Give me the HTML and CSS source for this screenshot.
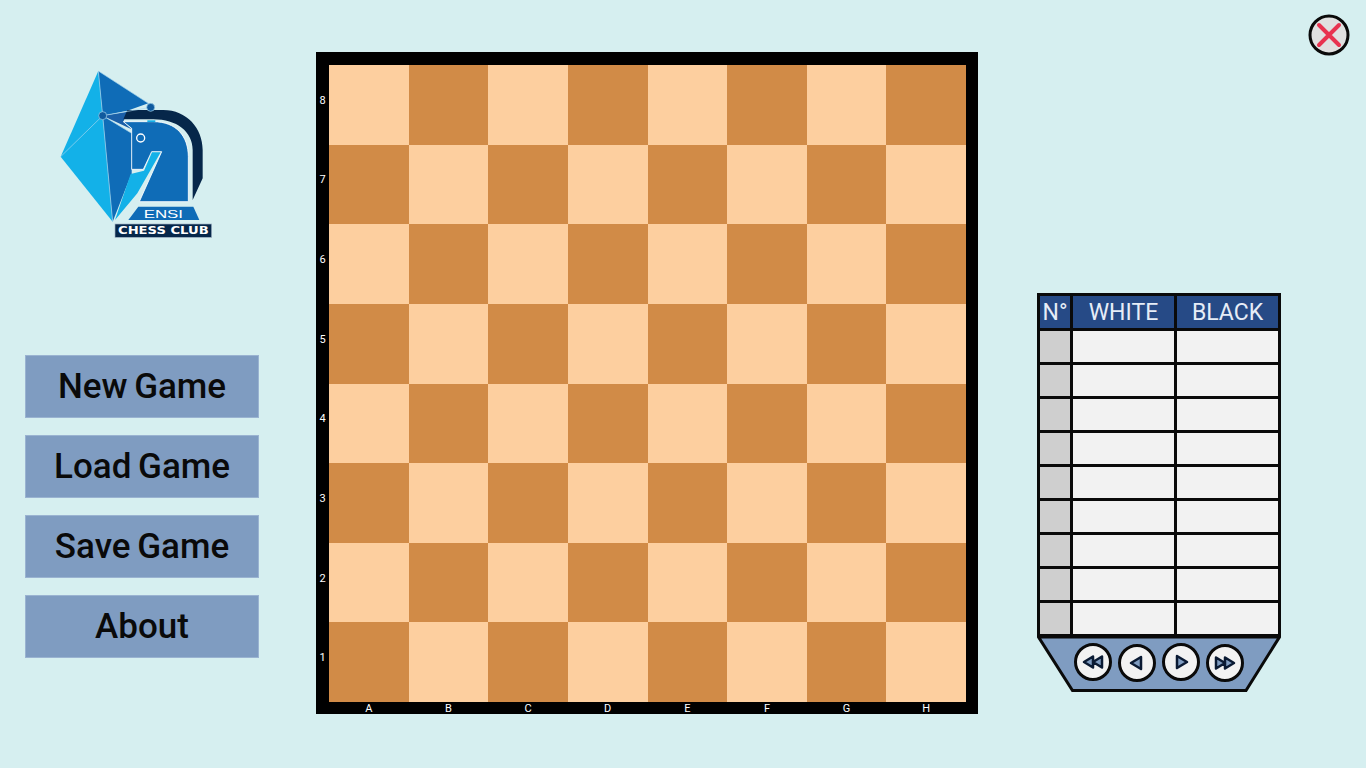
FILE: index.html
```html
<!DOCTYPE html>
<html lang="en">
<head>
  <meta charset="UTF-8" />
  <title>ENSI Chess Club</title>
  <link rel="stylesheet" href="styles.css">
</head>
<body>
  <div class="app">

    <aside class="sidebar">
      <svg class="logo" viewBox="0 0 570 570" width="190" height="190">
        <polygon points="175,33 62,290 218,485 188,167" fill="#13b1e8"/>
        <polygon points="175,33 325,130 262,152 188,167" fill="#0f6cb7"/>
        <polygon points="188,167 218,485 275,340 275,220" fill="#0f6cb7"/>
        <polygon points="188,167 262,155 250,185 275,208" fill="#1a5fa8"/>
        <path d="M262,150 L370,150 C440,150 488,205 488,270 L488,355 L458,420 L458,270 C458,215 410,178 340,178 L250,178 Z" fill="#06274a"/>
        <path d="M250,185 L340,185 C410,185 445,230 445,290 L445,425 L298,425 L365,275 L335,275 L310,328 L275,328 L275,205 Z" fill="#0f6cb7" stroke="#fff" stroke-width="2.5"/>
        <polygon points="225,480 272,342 312,332 336,277 362,277 292,400" fill="#13b1e8"/>
        <rect x="322" y="181" width="24" height="5" fill="#13b1e8"/>
        <circle cx="302" cy="234" r="12" fill="#0f6cb7" stroke="#fff" stroke-width="4"/>
        <g stroke="#a9d8ee" stroke-width="2" fill="none">
          <path d="M175,33 L188,167 L218,485 M62,290 L188,167 L275,220 M188,167 L332,142 M175,33 L325,130"/>
        </g>
        <circle cx="188" cy="167" r="12" fill="#0f5a9e" stroke="#a9d8ee" stroke-width="2"/>
        <circle cx="332" cy="142" r="12" fill="#0f5a9e" stroke="#a9d8ee" stroke-width="2"/>
        <polygon points="265,480 295,440 460,440 478,480" fill="#0f6cb7"/>
        <text x="370" y="473" class="logo-ensi" textLength="118" lengthAdjust="spacingAndGlyphs">ENSI</text>
        <rect x="225" y="492" width="290" height="40" fill="#06274a" stroke="#9fb2c4" stroke-width="2"/>
        <text x="370" y="522" class="logo-club" textLength="272" lengthAdjust="spacingAndGlyphs">CHESS CLUB</text>
      </svg>
      <nav class="menu">
        <button class="menu-btn">New Game</button>
        <button class="menu-btn">Load Game</button>
        <button class="menu-btn">Save Game</button>
        <button class="menu-btn">About</button>
      </nav>
    </aside>

    <main class="board">
      <div class="ranks">
        <span>8</span><span>7</span><span>6</span><span>5</span><span>4</span><span>3</span><span>2</span><span>1</span>
      </div>
      <div class="squares">
        <div class="l"></div><div class="d"></div><div class="l"></div><div class="d"></div><div class="l"></div><div class="d"></div><div class="l"></div><div class="d"></div>
        <div class="d"></div><div class="l"></div><div class="d"></div><div class="l"></div><div class="d"></div><div class="l"></div><div class="d"></div><div class="l"></div>
        <div class="l"></div><div class="d"></div><div class="l"></div><div class="d"></div><div class="l"></div><div class="d"></div><div class="l"></div><div class="d"></div>
        <div class="d"></div><div class="l"></div><div class="d"></div><div class="l"></div><div class="d"></div><div class="l"></div><div class="d"></div><div class="l"></div>
        <div class="l"></div><div class="d"></div><div class="l"></div><div class="d"></div><div class="l"></div><div class="d"></div><div class="l"></div><div class="d"></div>
        <div class="d"></div><div class="l"></div><div class="d"></div><div class="l"></div><div class="d"></div><div class="l"></div><div class="d"></div><div class="l"></div>
        <div class="l"></div><div class="d"></div><div class="l"></div><div class="d"></div><div class="l"></div><div class="d"></div><div class="l"></div><div class="d"></div>
        <div class="d"></div><div class="l"></div><div class="d"></div><div class="l"></div><div class="d"></div><div class="l"></div><div class="d"></div><div class="l"></div>
      </div>
      <div class="files">
        <span>A</span><span>B</span><span>C</span><span>D</span><span>E</span><span>F</span><span>G</span><span>H</span>
      </div>
    </main>

    <section class="side">
      <button class="close-btn" aria-label="Close">
        <svg viewBox="0 0 44 44" width="44" height="44">
          <circle cx="22" cy="22" r="19" fill="#e0e0e0" stroke="#0a0a0a" stroke-width="3"/>
          <path d="M12,12 L32,32 M32,12 L12,32" stroke="#e8324f" stroke-width="4" stroke-linecap="round"/>
        </svg>
      </button>

      <div class="moves">
        <table class="moves-table">
          <thead>
            <tr><th class="col-n">N°</th><th class="col-w">WHITE</th><th>BLACK</th></tr>
          </thead>
          <tbody>
            <tr><td></td><td></td><td></td></tr>
            <tr><td></td><td></td><td></td></tr>
            <tr><td></td><td></td><td></td></tr>
            <tr><td></td><td></td><td></td></tr>
            <tr><td></td><td></td><td></td></tr>
            <tr><td></td><td></td><td></td></tr>
            <tr><td></td><td></td><td></td></tr>
            <tr><td></td><td></td><td></td></tr>
            <tr><td></td><td></td><td></td></tr>
          </tbody>
        </table>

        <div class="tray">
          <svg class="tray-bg" viewBox="0 0 244 56" width="244" height="56">
            <polygon points="1.5,0 242.5,0 209,53.5 35.5,53.5" fill="#7f9cc1" stroke="#0a0a0a" stroke-width="3"/>
          </svg>
          <button class="nav-btn" aria-label="First move">
            <svg viewBox="0 0 24 24" width="24" height="24"><path d="M12,6.5 L3,12 L12,17.5 Z M21,6.5 L12,12 L21,17.5 Z" class="nav-arrow"/></svg>
          </button>
          <button class="nav-btn" aria-label="Previous move">
            <svg viewBox="0 0 24 24" width="24" height="24"><path d="M16,6 L6,12 L16,18 Z" class="nav-arrow"/></svg>
          </button>
          <button class="nav-btn" aria-label="Next move">
            <svg viewBox="0 0 24 24" width="24" height="24"><path d="M8,6 L18,12 L8,18 Z" class="nav-arrow"/></svg>
          </button>
          <button class="nav-btn" aria-label="Last move">
            <svg viewBox="0 0 24 24" width="24" height="24"><path d="M3,6.5 L12,12 L3,17.5 Z M12,6.5 L21,12 L12,17.5 Z" class="nav-arrow"/></svg>
          </button>
        </div>
      </div>
    </section>

  </div>
</body>
</html>
```

FILE: styles.css
```css
* { box-sizing: border-box; }
body {
  margin: 0;
  background: #d6eff0;
  font-family: 'Roboto', 'Liberation Sans', sans-serif;
  overflow: hidden;
}
button { padding: 0; border: none; background: none; font-family: inherit; cursor: pointer; }

.app {
  display: flex;
  align-items: flex-start;
  width: 1366px;
  height: 768px;
  padding-left: 25px;
}

/* left column */
.sidebar {
  width: 234px;
  padding-top: 60px;
  flex: none;
}
.logo {
  display: block;
  margin-left: 15px;
}
.logo-ensi {
  font: 400 32px 'Liberation Sans', sans-serif;
  fill: #fff;
  text-anchor: middle;
}
.logo-club {
  font: 700 30px 'DejaVu Sans', sans-serif;
  fill: #fff;
  text-anchor: middle;
}
.menu {
  display: flex;
  flex-direction: column;
  gap: 17px;
  margin-top: 105px;
}
.menu-btn {
  height: 63px;
  background: #7f9cc1;
  border: 1px solid #9ab3d1;
  color: #0a0a0a;
  font-size: 35px;
  font-weight: 500;
  word-spacing: -2px;
}

/* board */
.board {
  display: grid;
  grid-template-columns: 13px 637px 12px;
  grid-template-rows: 13px 637px 12px;
  width: 662px;
  height: 662px;
  margin: 52px 0 0 57px;
  flex: none;
  background: #000;
  color: #fff;
  font-size: 11px;
}
.squares {
  grid-column: 2;
  grid-row: 2;
  display: grid;
  grid-template-columns: repeat(8, 1fr);
  grid-template-rows: repeat(8, 1fr);
}
.l { background: #fdcf9f; }
.d { background: #d18b47; }
.ranks {
  grid-column: 1;
  grid-row: 2;
  display: grid;
  grid-template-rows: repeat(8, 1fr);
  place-items: center;
}
.ranks span { padding-bottom: 9px; }
.files {
  grid-column: 2;
  grid-row: 3;
  display: grid;
  grid-template-columns: repeat(8, 1fr);
  justify-items: center;
  line-height: 14px;
}

/* right column */
.side {
  display: flex;
  flex-direction: column;
  align-items: flex-start;
  width: 313px;
  margin-left: 59px;
  padding-top: 13px;
  flex: none;
}
.close-btn {
  display: block;
  height: 44px;
  align-self: flex-end;
  margin-right: -1px;
}
.moves {
  width: 244px;
  margin-top: 236px;
}
.moves-table {
  width: 244px;
  border-collapse: collapse;
  table-layout: fixed;
  border: 3px solid #0a0a0a;
}
.moves-table th,
.moves-table td {
  padding: 0;
  border: 3px solid #0a0a0a;
}
.moves-table th {
  height: 35px;
  background: #264a86;
  color: #e6edf7;
  font-size: 23px;
  font-weight: 400;
}
.moves-table td {
  height: 34px;
  background: #f2f2f2;
}
.moves-table .col-n { width: 33px; }
.moves-table .col-w { width: 104px; }
.moves-table td:first-child { background: #cfcfcf; }

.tray {
  position: relative;
  display: flex;
  justify-content: center;
  gap: 6px;
  height: 55px;
  padding-top: 6px;
}
.tray-bg {
  position: absolute;
  top: 0;
  left: 0;
}
.nav-btn {
  position: relative;
  display: flex;
  align-items: center;
  justify-content: center;
  width: 38px;
  height: 38px;
  border-radius: 50%;
  border: 3px solid #0a0a0a;
  background: #f2f2f2;
}
.nav-btn:nth-of-type(even) { margin-top: 1px; }
.nav-arrow {
  fill: #7f9cc1;
  stroke: #0a1a33;
  stroke-width: 2.5;
  stroke-linejoin: round;
}
```
